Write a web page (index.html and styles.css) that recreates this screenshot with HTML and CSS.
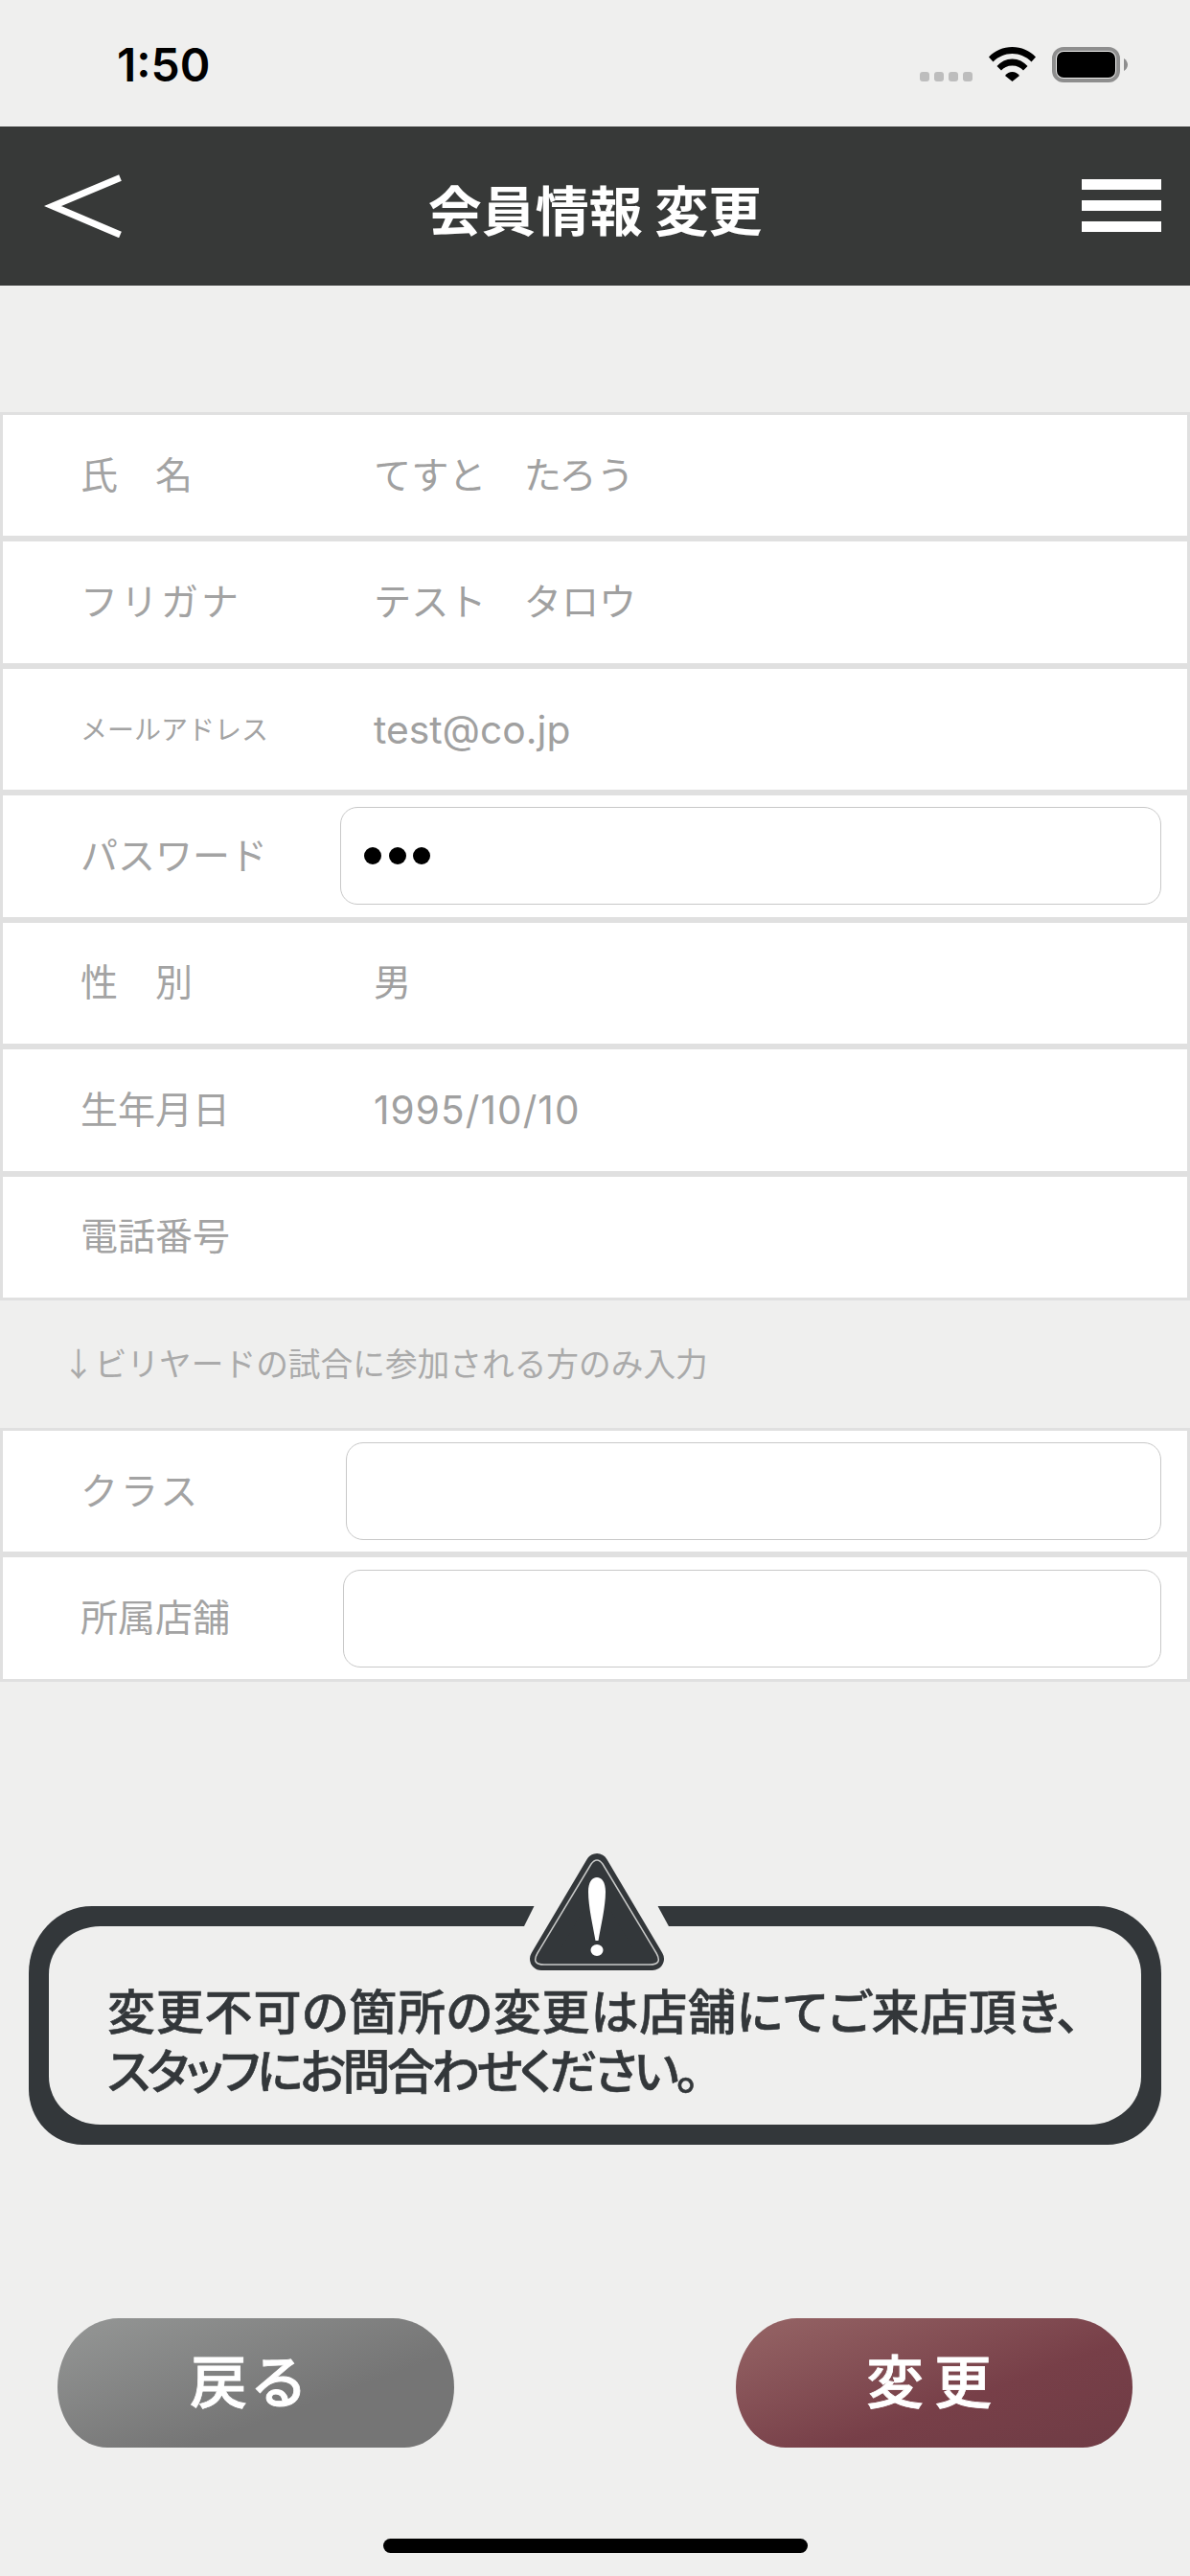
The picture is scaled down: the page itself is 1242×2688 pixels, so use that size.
FILE: index.html
```html
<!DOCTYPE html>
<html lang="ja">
<head>
    <meta charset="UTF-8">
    <meta name="viewport" content="width=device-width, initial-scale=1.0">
    <title>会員情報 変更</title>
    <link rel="stylesheet" href="styles.css">
</head>
<body>
<div class="status-bar">
    <span class="time">1:50</span>
    <div class="status-icons">
        <div class="signal"><span></span><span></span><span></span><span></span></div>
        <svg class="wifi" width="49" height="36" viewBox="0 0 49 36">
            <path d="M0 10.5C6.5 3.8 15 0 24.5 0S42.500 3.800 49 10.500L44.500 15.500C39 10 32 7 24.500 7S10 10 4.500 15.500Z"/>
            <path d="M8.500 20C12.500 15.500 18 12.500 24.500 12.500S36.500 15.500 40.500 20L36 24.500C33.500 21.500 29.500 19.500 24.500 19.500S15.500 21.500 13 24.500Z"/>
            <path d="M17 30C19 27.500 21.500 26 24.500 26S30 27.500 32 30L24.500 36Z"/>
        </svg>
        <svg class="battery" width="79" height="37" viewBox="0 0 79 37">
            <rect x="2" y="2" width="67" height="33" rx="10" fill="none" stroke="#8e8e8e" stroke-width="4"/>
            <rect x="5" y="5" width="61" height="27" rx="7"/>
            <path d="M75 12C77.500 13.500 79 16 79 18.500S77.500 23.500 75 25Z" fill="#8e8e8e"/>
        </svg>
    </div>
</div>

<header class="nav">
    <svg class="back" width="82" height="66" viewBox="0 0 82 66">
        <polyline points="79.500,3.500 9,33 79.500,63" fill="none" stroke="#fff" stroke-width="7"/>
    </svg>
    <h1 class="nav-title">会員情報 変更</h1>
    <div class="burger"><span></span><span></span><span></span></div>
</header>

<section class="group group-main">
    <div class="row"><span class="label">氏　名</span><span class="value">てすと　たろう</span></div>
    <div class="row"><span class="label label-kana">フリガナ</span><span class="value">テスト　タロウ</span></div>
    <div class="row"><span class="label label-small">メールアドレス</span><span class="value-latin">test@co.jp</span></div>
    <div class="row">
        <span class="label label-pass">パスワード</span>
        <div class="field"><i class="dot"></i><i class="dot"></i><i class="dot"></i></div>
    </div>
    <div class="row"><span class="label">性　別</span><span class="value">男</span></div>
    <div class="row"><span class="label">生年月日</span><span class="value-latin value-date">1995/10/10</span></div>
    <div class="row"><span class="label">電話番号</span></div>
</section>

<p class="hint">↓ビリヤードの試合に参加される方のみ入力</p>

<section class="group group-extra">
    <div class="row"><span class="label label-class">クラス</span><div class="field"></div></div>
    <div class="row"><span class="label label-shop">所属店舗</span><div class="field"></div></div>
</section>

<div class="notice">
    <div class="notice-body">
        <p class="notice-line notice-line-one">変更不可の箇所の変更は店舗にてご来店頂き、</p>
        <p class="notice-line notice-line-two">スタッフにお問合わせください。</p>
    </div>
    <svg class="notice-icon" width="166" height="130" viewBox="0 0 166 130">
        <polygon points="18,58 146,58 158.500,81 6.500,81" fill="#efefee"/>
        <polygon points="83,16 141,114 25,114" fill="#33373a" stroke="#33373a" stroke-width="24" stroke-linejoin="round"/>
        <path d="M77 15Q83 7 89 15L145 108Q152 120 138 120L28 120Q14 120 21 108Z" fill="none" stroke="#c9cac9" stroke-width="1.500"/>
        <path d="M74 44C74 34 78 29 83 29S92 34 92 44C92 60 87 80 84.500 95L81.500 95C79 80 74 60 74 44Z" fill="#fff"/>
        <ellipse cx="83" cy="105" rx="6.500" ry="6" fill="#fff"/>
    </svg>
</div>

<div class="buttons">
    <button class="btn btn-back">戻る</button>
    <button class="btn btn-change">変更</button>
</div>

<div class="home-bar"></div>
</body>
</html>
```

FILE: styles.css
```css
body {
    margin: 0;
    width: 1242px;
    height: 2688px;
    overflow: hidden;
    background-color: #efefee;
    font-family: "Noto Sans CJK JP", sans-serif;
}

/* status bar */
.status-bar {
    height: 132px;
    box-sizing: border-box;
    padding: 44px 65px 0 122px;
    display: flex;
    justify-content: space-between;
    align-items: flex-start;
}

.time {
    font-family: Inter, sans-serif;
    font-weight: 600;
    font-size: 48px;
    line-height: 48px;
    color: #000;
}

.status-icons {
    display: flex;
    align-items: flex-start;
    padding-top: 5px;
}

.signal {
    display: flex;
    gap: 5px;
    margin: 26px 17px 0 0;
}

.signal span {
    width: 10px;
    height: 10px;
    border-radius: 3px;
    background-color: #bdbdbd;
}

.battery {
    margin-left: 17px;
}

/* nav */
.nav {
    height: 166px;
    background-color: #373938;
    position: relative;
    display: flex;
    justify-content: center;
    align-items: center;
}

.back {
    position: absolute;
    left: 46px;
    top: 50px;
}

.nav-title {
    margin: 0;
    color: #fff;
    font-size: 56px;
    font-weight: 700;
    line-height: 1;
    position: relative;
    top: 2px;
}

.burger {
    position: absolute;
    right: 30px;
    top: 55px;
    width: 83px;
    display: flex;
    flex-direction: column;
    gap: 11px;
}

.burger span {
    height: 11px;
    background-color: #fff;
}

/* form rows */
.group {
    background-color: #e0e0e0;
    padding: 3px;
    display: flex;
    flex-direction: column;
    gap: 6px;
}

.group-main {
    margin-top: 132px;
}

.row {
    background-color: #fff;
    height: 126.43px;
    display: flex;
    align-items: center;
}

.group-extra .row {
    height: 126.5px;
}

.label {
    box-sizing: border-box;
    width: 387px;
    padding: 0 0 7px 81px;
    font-size: 39px;
    color: #a3a3a3;
    white-space: nowrap;
}

.label-kana {
    letter-spacing: 3px;
}

.label-small {
    font-size: 28px;
    padding-bottom: 3px;
}

.label-pass {
    width: 352px;
}

.label-class {
    width: 358px;
    letter-spacing: 3px;
}

.label-shop {
    width: 355px;
}

.value {
    padding-bottom: 7px;
    font-size: 39.200px;
    color: #a0a0a0;
}

.value-latin {
    font-family: Inter, sans-serif;
    font-size: 40.800px;
    color: #a0a0a0;
}

.value-date {
    font-size: 40.500px;
    letter-spacing: 1.100px;
}

.field {
    flex: 1;
    height: 102px;
    margin-right: 27px;
    box-sizing: border-box;
    padding-left: 24px;
    border: 1.500px solid #c8c8c8;
    border-radius: 18px;
    display: flex;
    align-items: center;
    gap: 7.500px;
}

.dot {
    width: 18px;
    height: 18px;
    border-radius: 50%;
    background-color: #000;
}

.hint {
    margin: 0;
    height: 133px;
    padding: 0 0 2px 65px;
    box-sizing: border-box;
    font-size: 33.700px;
    line-height: 129px;
    color: #aaaaaa;
    white-space: nowrap;
}

/* notice */
.notice {
    position: relative;
    box-sizing: border-box;
    margin: 234px 30px 0;
    height: 249px;
    padding: 21px;
    background-color: #33373a;
    border-radius: 66px 66px 56px 56px / 70px 70px 58px 58px;
}

.notice-body {
    height: 100%;
    box-sizing: border-box;
    padding: 55px 0 0 61px;
    background-color: #efefee;
    border-radius: 54px / 50px;
}

.notice-line {
    margin: 0;
    font-size: 50px;
    line-height: 62px;
    font-weight: 500;
    -webkit-text-stroke: 0.600px #33373a;
    font-feature-settings: "palt";
    color: #33373a;
    white-space: nowrap;
}

.notice-line-one {
    letter-spacing: 0.800px;
}

.notice-line-two {
    letter-spacing: -3.400px;
}

.notice-icon {
    position: absolute;
    left: 510px;
    top: -59px;
}

/* buttons */
.buttons {
    margin-top: 181px;
    padding: 0 60px;
    display: flex;
    justify-content: space-between;
}

.btn {
    width: 414px;
    height: 135px;
    border: none;
    padding: 0 0 10px;
    border-radius: 64px 64px 52px 52px / 72px 72px 63px 63px;
    color: #fff;
    font-family: inherit;
    font-size: 60px;
    font-weight: 500;
    -webkit-text-stroke: 0.800px #fff;
    letter-spacing: 11px;
}

.btn-back {
    padding-right: 12px;
    letter-spacing: 3px;
    background: linear-gradient(160deg, #959796 0%, #757575 65%);
}

.btn-change {
    background: linear-gradient(160deg, #966566 0%, #773f48 60%, #6f3c45 100%);
}

.home-bar {
    width: 443px;
    height: 15px;
    margin: 95px auto 0;
    background-color: #000;
    border-radius: 8px;
}
```
